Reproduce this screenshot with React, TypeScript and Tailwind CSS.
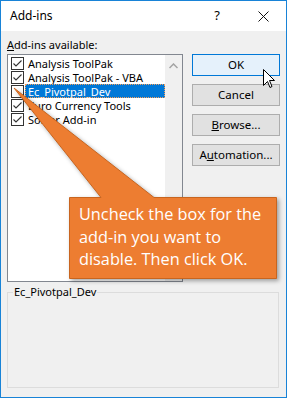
import React from "react";

const items = [
  { label: "Analysis ToolPak", checked: true },
  { label: "Analysis ToolPak - VBA", checked: true },
  { label: "Ec_Pivotpal_Dev", checked: false, selected: true },
  { label: "Euro Currency Tools", checked: true },
  { label: "Solver Add-in", checked: true },
];

function CheckBox({ checked }: { checked: boolean }) {
  return (
    <div className="w-[13px] h-[13px] border border-[#333333] bg-white shrink-0 flex items-center justify-center">
      {checked && (
        <svg width="11" height="11" viewBox="0 0 11 11">
          <path d="M1.5 5.5 L4 8 L9.5 2.5" fill="none" stroke="#333" strokeWidth="1.1" />
        </svg>
      )}
    </div>
  );
}

function Btn({ children, primary }: { children: React.ReactNode; primary?: boolean }) {
  return (
    <div
      className={
        "h-[22px] w-[88px] flex items-center justify-center text-[11.5px] text-black border " +
        (primary ? "border-[#0078d7] bg-[#e5f1fb]" : "border-[#adadad] bg-[#e1e1e1]")
      }
    >
      {children}
    </div>
  );
}

export default function App() {
  return (
    <div
      className="relative w-[287px] h-[398px] border border-[#1883d7] bg-[#f0f0f0] overflow-hidden flex flex-col"
      style={{ fontFamily: '"Noto Sans", "Segoe UI", sans-serif' }}
    >
      {/* Title bar */}
      <div className="h-[30px] bg-white flex items-center shrink-0">
        <span className="ml-[9px] text-[12px] text-black">Add-ins</span>
        <span className="ml-auto mr-[38px] text-[13px] text-black">?</span>
        <svg width="11" height="11" viewBox="0 0 11 11" className="mr-[17px]">
          <path d="M0.5 0.5 L10.5 10.5 M10.5 0.5 L0.5 10.5" stroke="#111" strokeWidth="1" />
        </svg>
      </div>

      {/* Body */}
      <div className="px-[6px] flex flex-col flex-1">
        <div className="h-[23px] flex items-end pb-[4px] text-[11px] text-black leading-none">
          <span>
            <span className="underline">A</span>dd-ins available:
          </span>
        </div>
        <div className="flex">
          <div className="w-[176px] h-[228px] border border-[#828790] bg-white flex">
            <div className="flex-1 pt-[1px] pl-[3px]">
              {items.map((it) => (
                <div key={it.label} className="h-[14px] flex items-center">
                  <CheckBox checked={it.checked} />
                  <div
                    className={
                      "ml-[1px] h-[14px] flex items-center flex-1 pl-[3px] text-[11px] leading-none " +
                      (it.selected
                        ? "bg-[#0078d7] text-white outline-1 outline-dotted outline-[#f5a05c] -outline-offset-1"
                        : "text-black")
                    }
                  >
                    {it.label}
                  </div>
                </div>
              ))}
            </div>
            <div className="w-[17px] bg-[#f0f0f0] flex flex-col items-center justify-between py-[8px]">
              <svg width="9" height="6" viewBox="0 0 9 6">
                <path d="M0.5 5 L4.5 1 L8.5 5" fill="none" stroke="#a3a3a3" strokeWidth="1.5" />
              </svg>
              <svg width="9" height="6" viewBox="0 0 9 6">
                <path d="M0.5 1 L4.5 5 L8.5 1" fill="none" stroke="#a3a3a3" strokeWidth="1.5" />
              </svg>
            </div>
          </div>
          <div className="ml-[9px] flex flex-col gap-[8px]">
            <Btn primary>OK</Btn>
            <Btn>Cancel</Btn>
            <Btn>
              <span>
                <span className="underline">B</span>rowse...
              </span>
            </Btn>
            <Btn>
              <span>
                A<span className="underline">u</span>tomation...
              </span>
            </Btn>
          </div>
        </div>

        {/* Group box */}
        <div className="mt-[10px] w-[272px] h-[96px] border border-[#dcdcdc]">
          <div className="-mt-[8px] ml-[5px] w-fit px-[1px] bg-[#f0f0f0] text-[11px] text-black leading-[14px]">
            Ec_Pivotpal_Dev
          </div>
        </div>
      </div>

      {/* Callout */}
      <svg
        className="absolute left-0 top-0 pointer-events-none"
        width="287"
        height="398"
        style={{ filter: "drop-shadow(2px 2px 2px rgba(0,0,0,0.35))" }}
      >
        <path
          d="M100 196.5 L13 87 L153 196.5 L275.5 196.5 L275.5 277.5 L68.5 277.5 L68.5 196.5 Z"
          fill="#ed7d31"
          stroke="#c8651f"
          strokeWidth="1"
        />
      </svg>
      <div
        className="absolute left-[78px] top-[202px] w-[196px] text-white text-[16.3px] leading-[22.5px]"
        style={{ fontFamily: '"Open Sans", sans-serif' }}
      >
        Uncheck the box for the
        <br />
        add-in you want to
        <br />
        disable. Then click OK.
      </div>

      {/* Mouse cursor */}
      <svg className="absolute left-[262px] top-[68px]" width="13" height="21" viewBox="0 0 13 21">
        <path
          d="M0.5 0.5 L0.5 16.5 L4.5 12.5 L7 18.5 L9 17.5 L6.5 11.5 L11.5 11.5 Z"
          fill="white"
          stroke="black"
          strokeWidth="1"
          strokeLinejoin="miter"
        />
      </svg>
    </div>
  );
}
